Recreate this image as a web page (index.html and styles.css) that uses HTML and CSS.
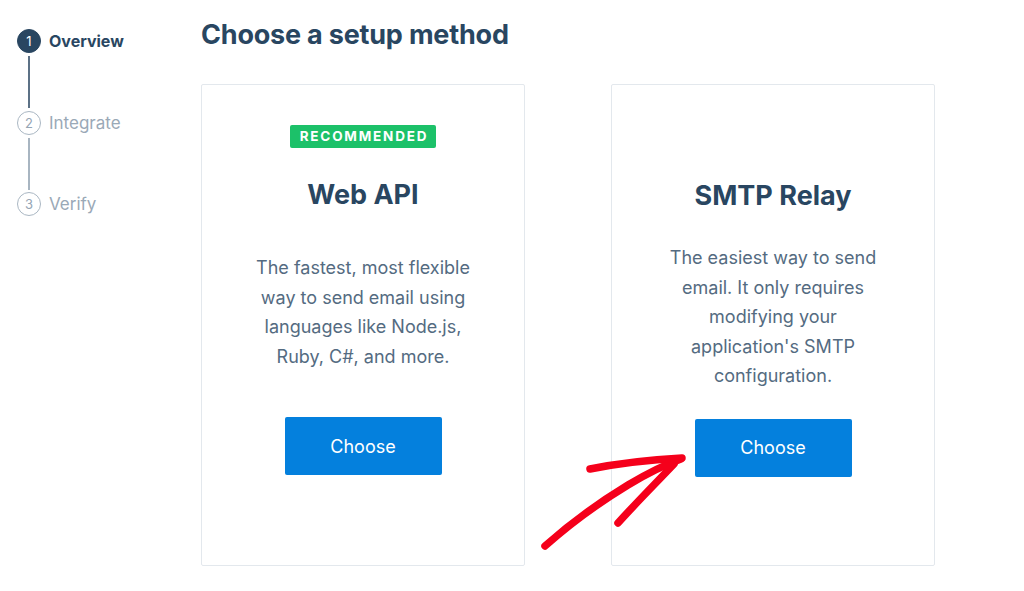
FILE: index.html
```html
<!DOCTYPE html>
<html lang="en">
<head>
    <meta charset="UTF-8">
    <title>Choose a setup method</title>
    <link rel="stylesheet" href="styles.css">
</head>
<body>
	<div class="page">
		<ul class="steps">
			<li class="step active"><span class="num">1</span>Overview</li>
			<li class="step"><span class="num">2</span>Integrate</li>
			<li class="step last"><span class="num">3</span>Verify</li>
		</ul>
		<div class="main">
			<h1>Choose a setup method</h1>
			<div class="cards">
				<div class="card card-api">
					<span class="badge">RECOMMENDED</span>
					<h2>Web API</h2>
					<p>The fastest, most flexible way to send email using languages like Node.js, Ruby, C#, and more.</p>
					<button class="btn">Choose</button>
				</div>
				<div class="card card-smtp">
					<h2>SMTP Relay</h2>
					<p>The easiest way to send email. It only requires modifying your application's SMTP configuration.</p>
					<button class="btn">Choose</button>
				</div>
			</div>
		</div>
	</div>
	<!-- hand drawn arrow pointing at the SMTP button -->
	<svg class="arrow" width="1024" height="591" viewBox="0 0 1024 591">
		<g fill="none" stroke="#f5001b" stroke-width="7.5" stroke-linecap="round" stroke-linejoin="round">
			<path d="M545 546 C 572 522, 600 502, 628 485 C 648 473, 664 465, 681 459"/>
			<path d="M590 469 C 615 464, 645 460, 682 458"/>
			<path d="M618 523 C 636 503, 655 484, 674 464"/>
		</g>
	</svg>
</body>
</html>
```

FILE: styles.css
```css
body {
	margin: 0;
	background: #fff;
	font-family: Inter, "Liberation Sans", sans-serif;
	color: #294661;
}
.page {
	display: flex;
	padding-top: 20px;
}
.steps {
	list-style: none;
	margin: 0;
	padding: 9px 0 0 17px;
	width: 201px;
	box-sizing: border-box;
}
.step {
	display: flex;
	align-items: center;
	height: 24px;
	font-size: 17px;
	color: #9aa9b7;
	margin-bottom: 57.5px;
	position: relative;
}
.step:before {
	content: "";
	position: absolute;
	left: 11px;
	top: 27px;
	width: 2px;
	height: 52px;
	background: #a8b5c1;
}
.step.active:before {
	background: #5c7186;
}
.step.last:before {
	display: none;
}
.step .num {
	flex: none;
	width: 24px;
	height: 24px;
	box-sizing: border-box;
	border: 1.5px solid #aab7c3;
	border-radius: 50%;
	display: inline-flex;
	align-items: center;
	justify-content: center;
	font-size: 13px;
	font-weight: 400;
	margin-right: 8px;
	color: #95a5b4;
}
.step.active {
	color: #294661;
	font-weight: 700;
	font-size: 16px;
}
.step.active .num {
	background: #294661;
	border-color: #294661;
	color: #fff;
}
.main {
	flex: 1;
}
h1 {
	margin: 0;
	font-size: 27px;
	line-height: 30px;
	font-weight: 700;
	letter-spacing: -0.2px;
}
.cards {
	display: flex;
	gap: 86px;
	margin-top: 34px;
}
.card {
	width: 324px;
	height: 482px;
	box-sizing: border-box;
	border: 1px solid #e3e8ed;
	border-radius: 2px;
	display: flex;
	flex-direction: column;
	align-items: center;
	text-align: center;
}
.card-api {
	padding-top: 40px;
}
.card-smtp {
	padding-top: 94px;
}
.badge {
	background: #1cc169;
	color: #fff;
	font-size: 13.5px;
	font-weight: 700;
	letter-spacing: 1.8px;
	line-height: 23px;
	padding: 0 8px 0 10px;
	border-radius: 2px;
}
h2 {
	margin: 0;
	font-size: 27px;
	line-height: 34px;
	font-weight: 700;
}
.card-api h2 {
	margin-top: 30px;
}
p {
	margin: 0;
	color: #546b81;
	font-size: 18px;
	line-height: 29.5px;
	width: 230px;
}
.card-api p {
	margin-top: 41px;
}
.card-smtp p {
	margin-top: 30px;
}
.btn {
	background: #0480dd;
	color: #fff;
	border: 0;
	border-radius: 2px;
	width: 157px;
	height: 58px;
	font-family: inherit;
	font-size: 18px;
}
.card-api .btn {
	margin-top: 46px;
}
.card-smtp .btn {
	margin-top: 28px;
}
.arrow {
	position: absolute;
	left: 0;
	top: 0;
}
```
